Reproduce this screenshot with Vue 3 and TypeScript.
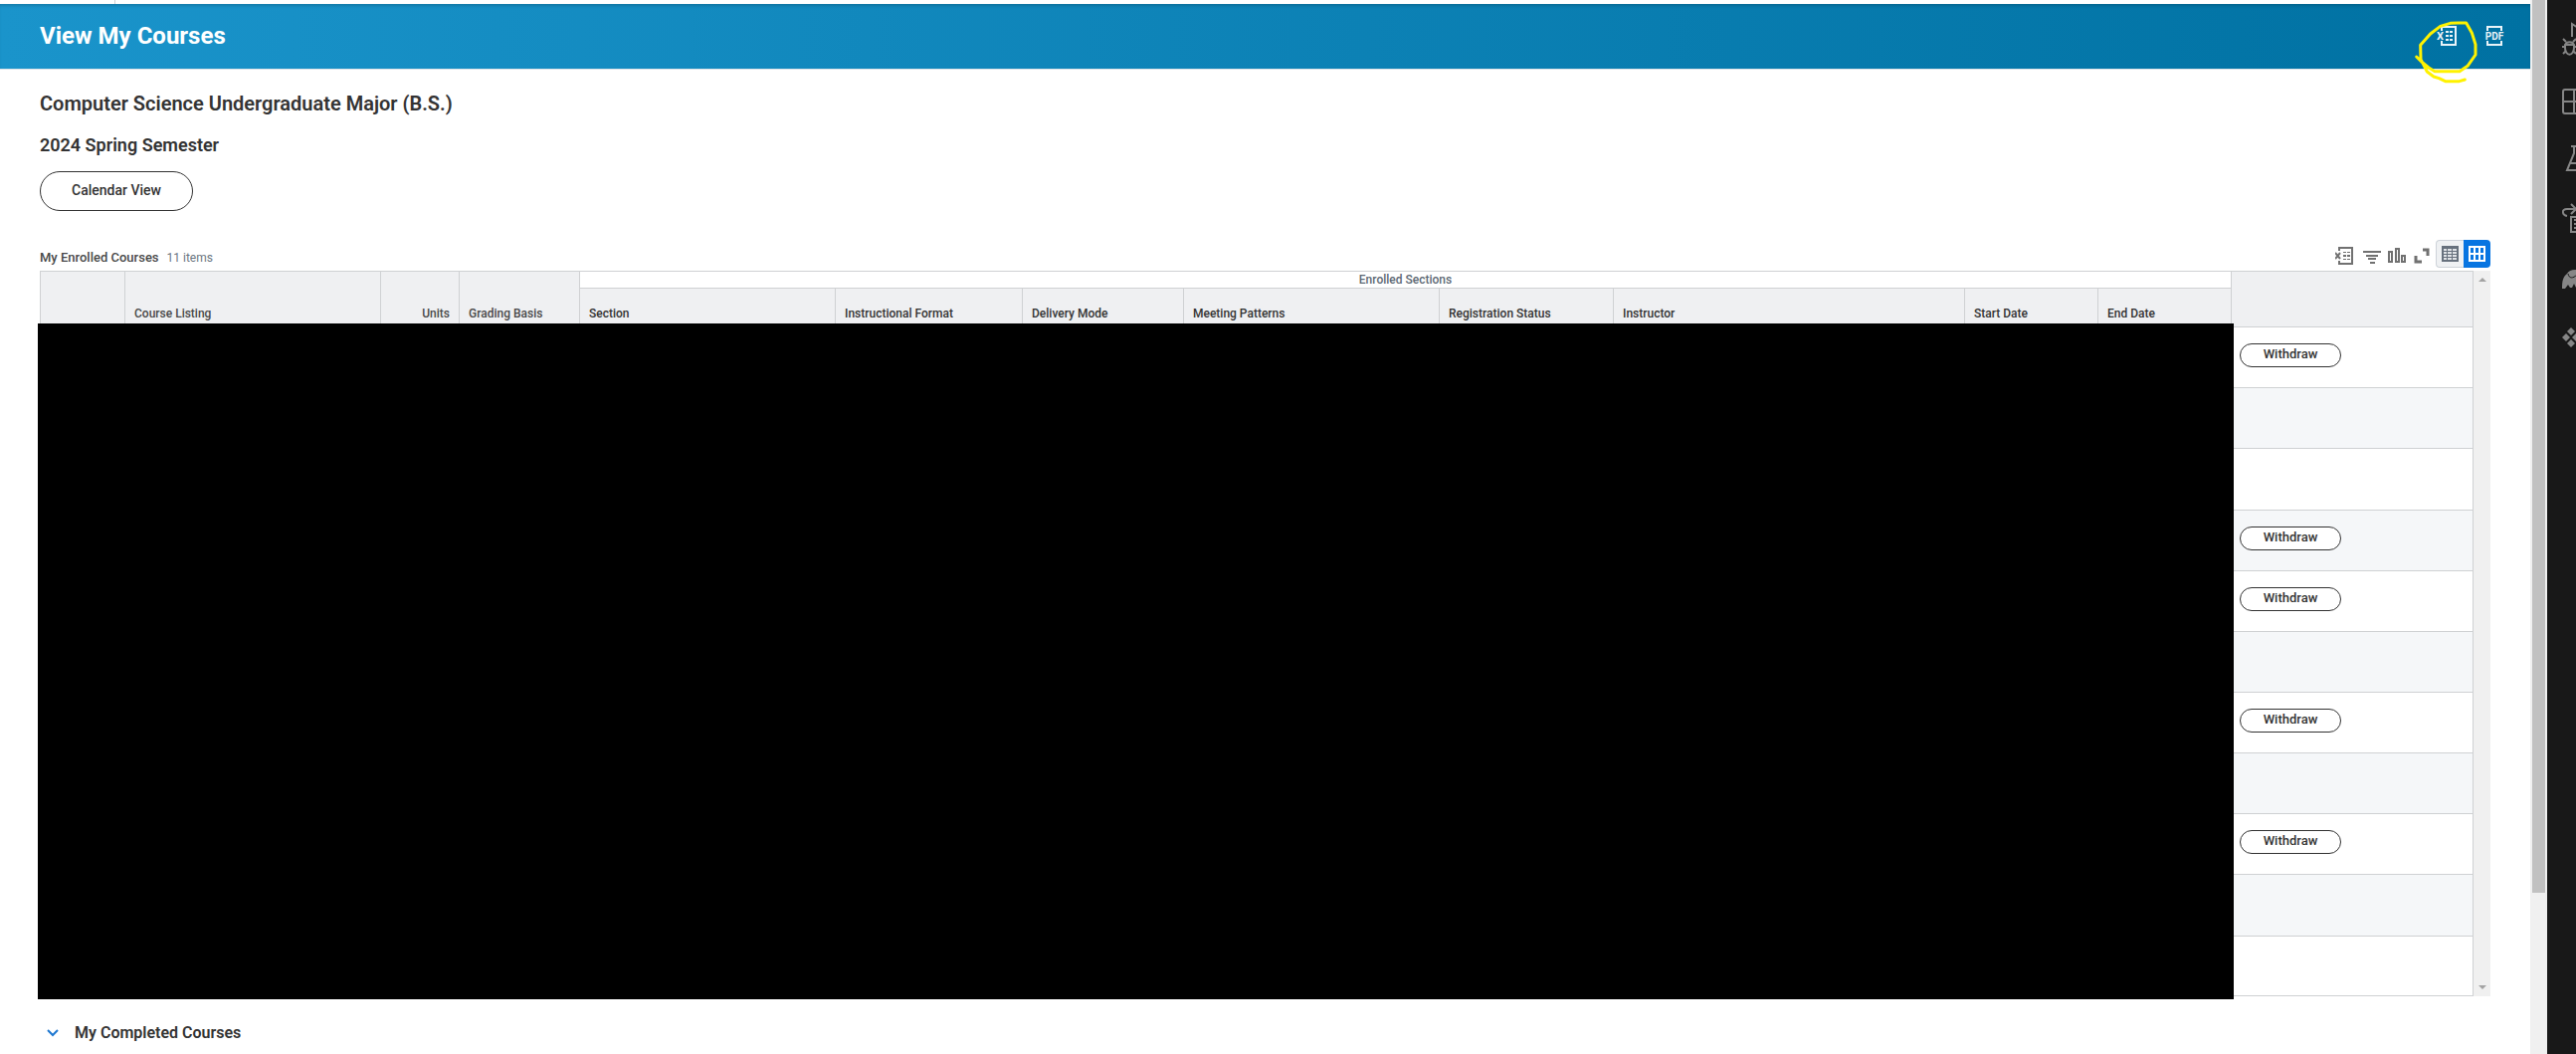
<script setup lang="ts">
import { ref } from 'vue'

interface Column {
  label: string
  width: number | null
  numeric?: boolean
}

interface Row {
  id: number
  withdraw: boolean
  tall?: boolean
}

const courseColumns: Column[] = [
  { label: '', width: 85 },
  { label: 'Course Listing', width: 257 },
  { label: 'Units', width: 79, numeric: true },
  { label: 'Grading Basis', width: 121 },
]

// The instructor column has no set width: it takes up the spare room.
const sectionColumns: Column[] = [
  { label: 'Section', width: 257 },
  { label: 'Instructional Format', width: 188 },
  { label: 'Delivery Mode', width: 162 },
  { label: 'Meeting Patterns', width: 257 },
  { label: 'Registration Status', width: 175 },
  { label: 'Instructor', width: null },
  { label: 'Start Date', width: 134 },
  { label: 'End Date', width: 134 },
]

const allColumns: Column[] = [...courseColumns, ...sectionColumns, { label: '', width: 244 }]

const rows: Row[] = [
  { id: 1, withdraw: true },
  { id: 2, withdraw: false },
  { id: 3, withdraw: false, tall: true },
  { id: 4, withdraw: true },
  { id: 5, withdraw: true },
  { id: 6, withdraw: false },
  { id: 7, withdraw: true },
  { id: 8, withdraw: false },
  { id: 9, withdraw: true },
  { id: 10, withdraw: false, tall: true },
  { id: 11, withdraw: false },
]

const view = ref<'compact' | 'grid'>('grid')
</script>

<template>
  <div class="page">
    <div class="main">
      <div class="strip"></div>
      <header class="banner">
        <h1>View My Courses</h1>
        <div class="banner-actions">
          <button type="button" class="icon-button" aria-label="Export to Excel">
            <svg width="20" height="20" viewBox="0 0 20 20">
              <path d="M5 5V1h14v18H5v-4" fill="none" stroke="#e9f3f8" stroke-width="2" />
              <path d="M9 5h3v2H9zM13 5h3v2h-3zM9 9h3v2H9zM13 9h3v2h-3zM9 13h3v2H9zM13 13h3v2h-3z" fill="#e9f3f8" />
              <text x="0" y="14" class="glyph" font-size="11">X</text>
            </svg>
          </button>
          <button type="button" class="icon-button" aria-label="View printable version">
            <svg width="20" height="20" viewBox="0 0 20 20">
              <path d="M3 5V1h14v4M3 15v4h14v-4" fill="none" stroke="#e9f3f8" stroke-width="2" />
              <text x="10" y="14" class="glyph" font-size="10" text-anchor="middle">PDF</text>
            </svg>
          </button>
        </div>
      </header>
      <svg class="scribble" width="68" height="66" viewBox="107 58 204 198">
        <path
          d="M118 172 133 187 155 205 173 216H248L272 200 296 166V135L285 100 268 70H245L220 71 190 80 160 103 130 137 131 180 150 217 170 232 186 237 205 246H247L264 241"
          fill="none"
          stroke="#fff200"
          stroke-width="9"
          stroke-linejoin="round"
          stroke-linecap="round"
        />
      </svg>

      <main class="content">
        <h2>Computer Science Undergraduate Major (B.S.)</h2>
        <h3>2024 Spring Semester</h3>
        <button type="button" class="pill calendar">Calendar View</button>

        <div class="toolbar">
          <h4>My Enrolled Courses</h4>
          <span class="count">11 items</span>
          <div class="tools">
            <button type="button" class="icon-button" aria-label="Export to Excel">
              <svg width="20" height="20" viewBox="0 0 20 20">
                <path d="M4 5V2h13v16H4v-3" fill="none" stroke="#717171" stroke-width="2" />
                <path d="M8 6h3v1H8zM12 6h3v1h-3zM8 9h3v2H8zM12 9h3v2h-3zM8 13h3v1H8zM12 13h3v1h-3z" fill="#717171" />
                <path d="M0 7l5 6M5 7l-5 6" stroke="#717171" stroke-width="2" />
              </svg>
            </button>
            <button type="button" class="icon-button" aria-label="Filter">
              <svg width="20" height="20" viewBox="0 0 20 20">
                <path d="M2 6h18M5 10h12M7 13h8M9 17h5" stroke="#717171" stroke-width="2" />
              </svg>
            </button>
            <button type="button" class="icon-button" aria-label="Chart">
              <svg width="20" height="20" viewBox="0 0 20 20">
                <path d="M2 6h3v10H2zM9 3h3v13H9zM15 10h3v6h-3z" fill="none" stroke="#717171" stroke-width="2" />
              </svg>
            </button>
            <button type="button" class="icon-button" aria-label="Expand">
              <svg width="20" height="20" viewBox="0 0 20 20">
                <path d="M10 4h5v6M3 10v6h6" fill="none" stroke="#717171" stroke-width="3" />
              </svg>
            </button>
          </div>
          <div class="switch">
            <button type="button" aria-label="Compact view" :aria-pressed="view === 'compact'" @click="view = 'compact'">
              <svg width="18" height="16" viewBox="0 0 18 16">
                <path d="M0 0h17v16H0z" fill="#67717d" />
                <path d="M2 3h3v2H2zM6 3h4v2H6zM11 3h4v2h-4zM2 6h3v2H2zM6 6h4v2H6zM11 6h4v2h-4zM2 9h3v2H2zM6 9h4v2H6zM11 9h4v2h-4zM2 12h3v2H2zM6 12h4v2H6zM11 12h4v2h-4z" fill="#dfe2e6" />
              </svg>
            </button>
            <button type="button" class="active" aria-label="Grid view" :aria-pressed="view === 'grid'" @click="view = 'grid'">
              <svg width="18" height="16" viewBox="0 0 18 16">
                <path d="M0 0h17v16H0z" fill="#fff" />
                <path d="M2 2h3v5H2zM7 2h3v5H7zM12 2h3v5h-3zM2 9h3v5H2zM7 9h3v5H7zM12 9h3v5h-3z" fill="#0875e1" />
              </svg>
            </button>
          </div>
        </div>

        <div class="grid">
          <table>
            <colgroup>
              <col v-for="(column, i) in allColumns" :key="i" :style="column.width ? { width: column.width + 'px' } : {}" />
            </colgroup>
            <thead>
              <tr class="group-row">
                <th v-for="column in courseColumns" :key="column.label" rowspan="2" :class="{ numeric: column.numeric }">{{ column.label }}</th>
                <th :colspan="sectionColumns.length" class="group">Enrolled Sections</th>
                <th rowspan="2" class="last"></th>
              </tr>
              <tr class="label-row">
                <th v-for="column in sectionColumns" :key="column.label" class="section">{{ column.label }}</th>
              </tr>
            </thead>
            <tbody>
              <tr v-for="row in rows" :key="row.id" :class="{ tall: row.tall }">
                <td v-for="n in allColumns.length - 1" :key="n"></td>
                <td class="last">
                  <button v-if="row.withdraw" type="button" class="pill withdraw">Withdraw</button>
                </td>
              </tr>
            </tbody>
          </table>
          <div class="grid-scroll">
            <svg width="8" height="4" viewBox="0 0 8 4"><path d="M0 4 4 0 8 4z" fill="#a3a3a3" /></svg>
            <svg width="8" height="4" viewBox="0 0 8 4"><path d="M0 0h8L4 4z" fill="#a3a3a3" /></svg>
          </div>
          <div class="redaction"></div>
        </div>

        <button type="button" class="completed" aria-expanded="false">
          <svg width="12" height="8" viewBox="0 0 12 8"><path d="M1 1l5 5 5-5" fill="none" stroke="#1f78d1" stroke-width="2" /></svg>
          My Completed Courses
        </button>
      </main>
    </div>

    <div class="page-scroll"><div class="thumb"></div></div>

    <aside class="rail">
      <svg viewBox="0 0 28 60">
        <path d="M10 27V14l17 11-9 7" />
        <path d="M3 35a5 5 0 0 1 9 0v3a4 6 0 0 1-9 0zM3 35h9M4 32l-3-3M11 32l3-3M3 37H0M12 37h3M4 41l-3 3M11 41l3 3" />
      </svg>
      <svg viewBox="0 0 28 60">
        <rect x="1" y="20" width="24" height="24" rx="2" />
        <path d="M12 20v24M1 32h24" />
      </svg>
      <svg viewBox="0 0 28 60">
        <path d="M9 17h14M12 17v7L5 41h22l-7-17v-7M8 34h16" />
      </svg>
      <svg viewBox="0 0 28 60">
        <path d="M5 27C0 26-1 20 5 20h8M9 15l5 5-5 5" />
        <path d="M9 28h14v15H9zM12 31h8M12 35h8M12 39h8" />
      </svg>
      <svg viewBox="0 0 28 60" class="solid">
        <path d="M0 40C0 32 1 28 5 25c2-4 8-5 13-3 6 2 8 8 8 17h-4l-2-3-3 3h-3l-2-4-2 4H8l-2-3-3 4z" />
        <path d="M6 25c1 5 5 5 9 1" class="cut" />
      </svg>
      <svg viewBox="0 0 28 60" class="solid">
        <path d="M9 19l4 4-4 4-4-4zM4 25l4 4-4 4-4-4zM14 25l4 4-4 4-4-4zM9 31l4 4-4 4-4-4z" />
      </svg>
    </aside>
  </div>
</template>

<style>
body {
  margin: 0;
  background: #fff;
}
</style>

<style scoped>
.page {
  display: flex;
  min-height: 100vh;
  font-family: Roboto, "Liberation Sans", sans-serif;
  color: #333;
}

.page *,
.page {
  box-sizing: border-box;
}

button {
  font-family: inherit;
  padding: 0;
  cursor: pointer;
}

h1,
h2,
h3,
h4 {
  margin: 0;
  font-weight: 600;
}

.main {
  position: relative;
  flex: 1;
  min-width: 0;
}

.strip {
  width: 116px;
  height: 4px;
  border-right: 1px solid #cfd1d3;
}

.banner {
  display: flex;
  align-items: flex-start;
  justify-content: space-between;
  height: 66px;
  padding: 0 26px 0 40px;
  border-bottom: 1px solid #dce3e8;
  background: linear-gradient(to right, #1a94cb, #0071a2);
  box-shadow: inset 0 3px 3px -1px rgba(0, 0, 0, 0.15);
}

.banner h1 {
  font-size: 24px;
  line-height: 64px;
  font-weight: 700;
  color: #fff;
}

.banner-actions {
  display: flex;
  gap: 28px;
  padding-top: 22px;
}

.icon-button {
  display: block;
  border: 0;
  background: none;
}

.icon-button svg {
  display: block;
}

.glyph {
  fill: #e9f3f8;
  font-family: Roboto, sans-serif;
  font-weight: 700;
}

.scribble {
  position: absolute;
  top: 19px;
  right: 50px;
}

.content {
  padding: 20px 40px 0;
}

h2 {
  font-size: 20px;
  line-height: 28px;
}

h3 {
  margin-top: 16px;
  font-size: 18px;
  line-height: 24px;
}

.pill {
  display: block;
  border: 1px solid #333;
  background: #fff;
  color: #333;
  font-weight: 500;
}

.calendar {
  height: 40px;
  margin-top: 14px;
  padding: 0 31px 2px;
  border-radius: 20px;
  font-size: 14px;
}

.withdraw {
  width: 102px;
  height: 24px;
  padding-bottom: 2px;
  border-radius: 12px;
  font-size: 13px;
  line-height: 20px;
}

.toolbar {
  display: flex;
  align-items: center;
  height: 28px;
  margin: 29px 0 3px;
}

h4 {
  margin-top: 8px;
  font-size: 13px;
  line-height: 16px;
  font-weight: 500;
  color: #494949;
}

.count {
  margin: 8px auto 0 8px;
  font-size: 12px;
  line-height: 16px;
  color: #6b7681;
}

.tools {
  display: flex;
  gap: 6px;
  margin: 4px 3px 0 0;
}

.switch {
  display: flex;
}

.switch button {
  display: flex;
  align-items: center;
  justify-content: center;
  width: 28px;
  height: 28px;
  border: 1px solid #ced3d9;
  border-right: 0;
  border-radius: 4px 0 0 4px;
  background: #eff1f3;
}

.switch .active {
  width: 27px;
  border: 0;
  border-radius: 0 4px 4px 0;
  background: #0875e1;
}

.grid {
  position: relative;
  display: flex;
}

table {
  flex: 1;
  min-width: 0;
  table-layout: fixed;
  border-collapse: separate;
  border-spacing: 0;
}

th,
td {
  border: 0 solid #cfd1d3;
  border-width: 1px 0 0 1px;
  padding: 0;
}

.last {
  border-right-width: 1px;
}

th {
  padding: 0 9px 5px 9px;
  background: #eff0f2;
  font-size: 12px;
  line-height: 16px;
  font-weight: 500;
  color: #494949;
  text-align: left;
  vertical-align: bottom;
  white-space: nowrap;
}

th.numeric {
  text-align: right;
}

th.section {
  color: #333;
}

th.group {
  padding: 0;
  background: #fff;
  color: #5e6a75;
  text-align: center;
}

.group-row {
  height: 17px;
}

.label-row {
  height: 39px;
}

tbody tr {
  height: 61px;
}

tbody .tall {
  height: 62px;
}

tbody tr:nth-child(even) {
  background: #f5f7f9;
}

td.last {
  padding: 16px 0 0 8px;
  vertical-align: top;
}

tbody tr:last-child td {
  border-bottom-width: 1px;
}

.grid-scroll {
  display: flex;
  flex-direction: column;
  align-items: center;
  justify-content: space-between;
  width: 17px;
  padding: 7px 0;
  background: #f0f0f0;
}

.redaction {
  position: absolute;
  top: 53px;
  right: 258px;
  bottom: -3px;
  left: -2px;
  background: #000;
}

.completed {
  display: flex;
  align-items: center;
  gap: 16px;
  margin: 25px 0 9px;
  padding-left: 7px;
  border: 0;
  background: none;
  font-size: 16px;
  line-height: 24px;
  font-weight: 600;
  color: #333;
}

.page-scroll {
  width: 17px;
  padding: 0 2px;
  background: #f0f0f0;
}

.thumb {
  height: 84.7%;
  background: #c1c1c1;
}

.rail {
  width: 29px;
  padding: 10px 0 0 15px;
  overflow: hidden;
  background: #181818;
}

.rail svg {
  display: block;
  width: 28px;
  height: 60px;
  fill: none;
  stroke: #868686;
  stroke-width: 2;
}

.rail .solid {
  fill: #868686;
  stroke: none;
}

.rail .cut {
  fill: none;
  stroke: #181818;
  stroke-width: 1;
}
</style>
